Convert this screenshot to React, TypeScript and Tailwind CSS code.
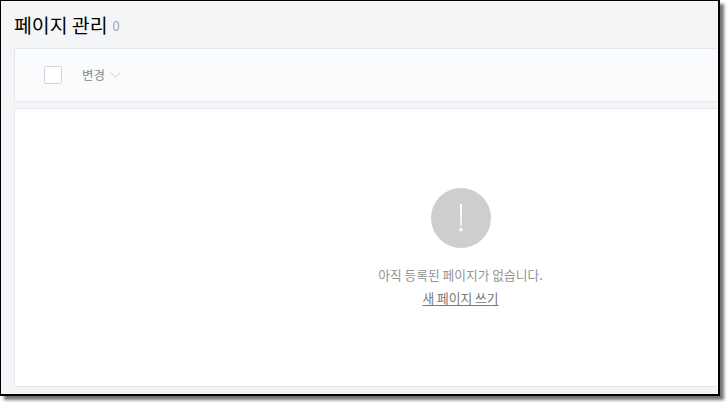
import React from "react";

const App: React.FC = () => {
  return (
    <div className="w-[728px] h-[404px] bg-white overflow-hidden font-['Noto_Sans_CJK_KR','Noto_Sans',sans-serif]">
      <div className="w-[720px] h-[396px] border-2 border-black border-t-[1px] border-l-[1px] bg-[#f3f5f7] shadow-[4px_4px_3px_rgba(0,0,0,0.55)] flex flex-col pl-[13px] overflow-hidden">
        <div className="h-[47px] flex items-center gap-[5px] shrink-0">
          <h1 className="text-[19.4px] leading-[28px] text-black font-normal">페이지 관리</h1>
          <span className="text-[13px] leading-[20px] mt-[2px] text-[#98a4b8]">0</span>
        </div>
        <div className="h-[54px] w-[893px] shrink-0 border border-[#e4e7ee] bg-[#fafbfd] flex items-center pl-[29px]">
          <span className="w-[18px] h-[18px] bg-white border border-[#d2d4d9] rounded-[2px]" />
          <span className="ml-5 text-[12.5px] leading-[18px] text-[#888]">변경</span>
          <svg className="ml-[5px] mt-[1px]" width="11" height="7" viewBox="0 0 11 7" fill="none" stroke="#d0d0d0" strokeWidth="1">
            <path d="M0.5 0.5 L5.5 5.5 L10.5 0.5" />
          </svg>
        </div>
        <div className="mt-[6px] mb-[7px] w-[893px] flex-1 border border-[#e4e7ee] bg-white flex flex-col items-center pt-[79px]">
          <div className="w-[60px] h-[60px] rounded-full bg-[#cecece] flex items-center justify-center">
            <svg width="4" height="28" viewBox="0 0 4 28" fill="white">
              <path d="M0.9 0 H3.1 L2.6 22 H1.4 Z" />
              <circle cx="2" cy="25.8" r="1.7" />
            </svg>
          </div>
          <p className="mt-[17px] text-[12.75px] leading-[20px] text-[#949494]">아직 등록된 페이지가 없습니다.</p>
          <a className="mt-[3px] text-[12.75px] leading-[20px] text-[#777] underline underline-offset-2">새 페이지 쓰기</a>
        </div>
      </div>
    </div>
  );
};

export default App;
